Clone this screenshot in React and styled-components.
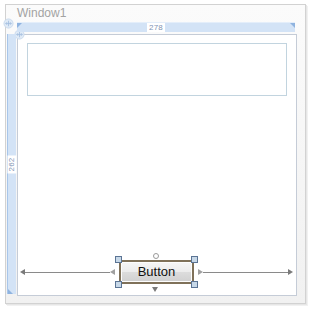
import React from 'react';
import styled, { createGlobalStyle } from 'styled-components';

const GlobalStyle = createGlobalStyle`
  html, body {
    margin: 0;
    padding: 0;
    background: #ffffff;
    font-family: "Liberation Sans", Arial, sans-serif;
  }
`;

const Page = styled.div`
  width: 311px;
  height: 310px;
  padding: 4px 0 0 5px;
  box-sizing: border-box;
`;

const WindowFrame = styled.div`
  position: relative;
  width: 301px;
  height: 300px;
  box-sizing: border-box;
  border: 1px solid #d2d2d2;
  background: linear-gradient(#fbfbfb, #f1f1f1);
  box-shadow: 1px 1px 0 #e6e6e6, 2px 2px 0 #f1f1f1;
  display: grid;
  grid-template-columns: 11px 280px;
  grid-template-rows: 17px 12px 262px;
`;

const Title = styled.div`
  grid-column: 2;
  grid-row: 1;
  font-size: 12px;
  line-height: 15px;
  color: #a3a3a3;
  padding-top: 1px;
`;

const TopRuler = styled.div`
  grid-column: 2;
  grid-row: 2;
  width: 278px;
  height: 9px;
  background: #d3e3f6;
  border-top: 1px solid #e4eefa;
  position: relative;
  display: flex;
  justify-content: center;
  align-items: center;

  &:before,
  &:after {
    content: '';
    position: absolute;
    top: 0;
    border-top: 5px solid #8fb3df;
  }
  &:before {
    left: 0;
    border-right: 5px solid transparent;
  }
  &:after {
    right: 0;
    border-left: 5px solid transparent;
  }
`;

const RulerLabel = styled.span`
  background: #ffffff;
  color: #7d93b4;
  font-size: 8px;
  line-height: 9px;
  padding: 0 2px;
  letter-spacing: 0.2px;
`;

const LeftRuler = styled.div`
  grid-column: 1;
  grid-row: 3;
  width: 9px;
  height: 260px;
  margin-left: 1px;
  background: #d3e3f6;
  border-left: 1px solid #a8c6ea;
  box-sizing: border-box;
  position: relative;
  display: flex;
  align-items: center;
  justify-content: center;

  &:after {
    content: '';
    position: absolute;
    left: 0;
    bottom: 0;
    border-bottom: 5px solid #8fb3df;
    border-right: 5px solid transparent;
  }
`;

const VerticalLabel = styled(RulerLabel)`
  transform: rotate(-90deg);
  white-space: nowrap;
`;

const Grip = styled.svg`
  position: absolute;
  width: 11px;
  height: 11px;
  left: ${p => p.$x}px;
  top: ${p => p.$y}px;
`;

const Client = styled.div`
  grid-column: 2;
  grid-row: 3;
  width: 280px;
  height: 262px;
  box-sizing: border-box;
  border: 1px solid #c5ccd7;
  background: #ffffff;
  display: flex;
  flex-direction: column;
  padding: 8px 0 11px 0;
`;

const TextBox = styled.div`
  width: 260px;
  height: 53px;
  margin-left: 9px;
  box-sizing: border-box;
  border: 1px solid #c2d4df;
`;

const BottomRow = styled.div`
  margin-top: auto;
  display: flex;
  align-items: center;
  padding: 0 3px 0 2px;
`;

const Dimension = styled.div`
  flex: 1;
  display: flex;
  align-items: center;
`;

const Line = styled.div`
  flex: 1;
  height: 1px;
  background: #8a8a8a;
`;

const Tri = styled.span`
  width: 0;
  height: 0;
  border-top: 3.5px solid transparent;
  border-bottom: 3.5px solid transparent;
  ${p => (p.dir === 'left'
    ? `border-right: 5px solid ${p.light ? '#a0a0a0' : '#7a7a7a'};`
    : `border-left: 5px solid ${p.light ? '#a0a0a0' : '#7a7a7a'};`)}
`;

const Gap = styled.span`
  width: ${p => p.w}px;
`;

const ButtonWrap = styled.div`
  position: relative;
  width: 75px;
  height: 24px;
  margin: 0 3px;
`;

const StyledButton = styled.button`
  width: 100%;
  height: 100%;
  box-sizing: border-box;
  border: 2px solid #7f7159;
  border-radius: 3px;
  background: linear-gradient(#f6f6f6 0%, #ececec 48%, #dcdcdc 52%, #d0d0d0 100%);
  box-shadow: inset 0 0 0 1px #fdfdfd;
  font-family: "Liberation Sans", Arial, sans-serif;
  font-size: 13px;
  color: #111;
  padding: 0;
  line-height: 20px;
`;

const Handle = styled.span`
  position: absolute;
  width: 5px;
  height: 5px;
  background: #c7d8e8;
  border: 1px solid #5b7494;
  ${p => (p.top ? 'top: -4px;' : 'bottom: -4px;')}
  ${p => (p.left ? 'left: -4px;' : 'right: -4px;')}
`;

const RotateDot = styled.span`
  position: absolute;
  top: -7px;
  left: 34px;
  width: 4px;
  height: 4px;
  border: 1px solid #9a9a9a;
  border-radius: 50%;
  background: #fff;
`;

const DownMark = styled.span`
  position: absolute;
  bottom: -8px;
  left: 33px;
  border-left: 3.5px solid transparent;
  border-right: 3.5px solid transparent;
  border-top: 5px solid #7a7a7a;
`;

const GripIcon = ({ x, y }) => (
  <Grip viewBox="0 0 12 12" $x={x} $y={y}>
    <circle cx="6" cy="6" r="5" fill="#dfeaf6" stroke="#c9daee" />
    <path d="M3 6h6M3 6l1.5-1.5M3 6l1.5 1.5M9 6l-1.5-1.5M9 6l-1.5 1.5M6 3v6" stroke="#a3bedf" fill="none" strokeWidth="0.9" />
  </Grip>
);

const App = () => (
  <>
    <GlobalStyle />
    <Page>
      <WindowFrame>
        <GripIcon x={-3} y={13} />
        <GripIcon x={8} y={24} />
        <Title>Window1</Title>
        <TopRuler>
          <RulerLabel>278</RulerLabel>
        </TopRuler>
        <LeftRuler>
          <VerticalLabel>262</VerticalLabel>
        </LeftRuler>
        <Client>
          <TextBox />
          <BottomRow>
            <Dimension>
              <Tri dir="left" />
              <Line />
              <Tri dir="left" light />
              <Gap w={1} />
            </Dimension>
            <ButtonWrap>
              <StyledButton>Button</StyledButton>
              <Handle top left />
              <Handle top />
              <Handle left />
              <Handle />
              <RotateDot />
              <DownMark />
            </ButtonWrap>
            <Dimension>
              <Gap w={1} />
              <Tri dir="right" light />
              <Line />
              <Tri dir="right" />
            </Dimension>
          </BottomRow>
        </Client>
      </WindowFrame>
    </Page>
  </>
);

export default App;
